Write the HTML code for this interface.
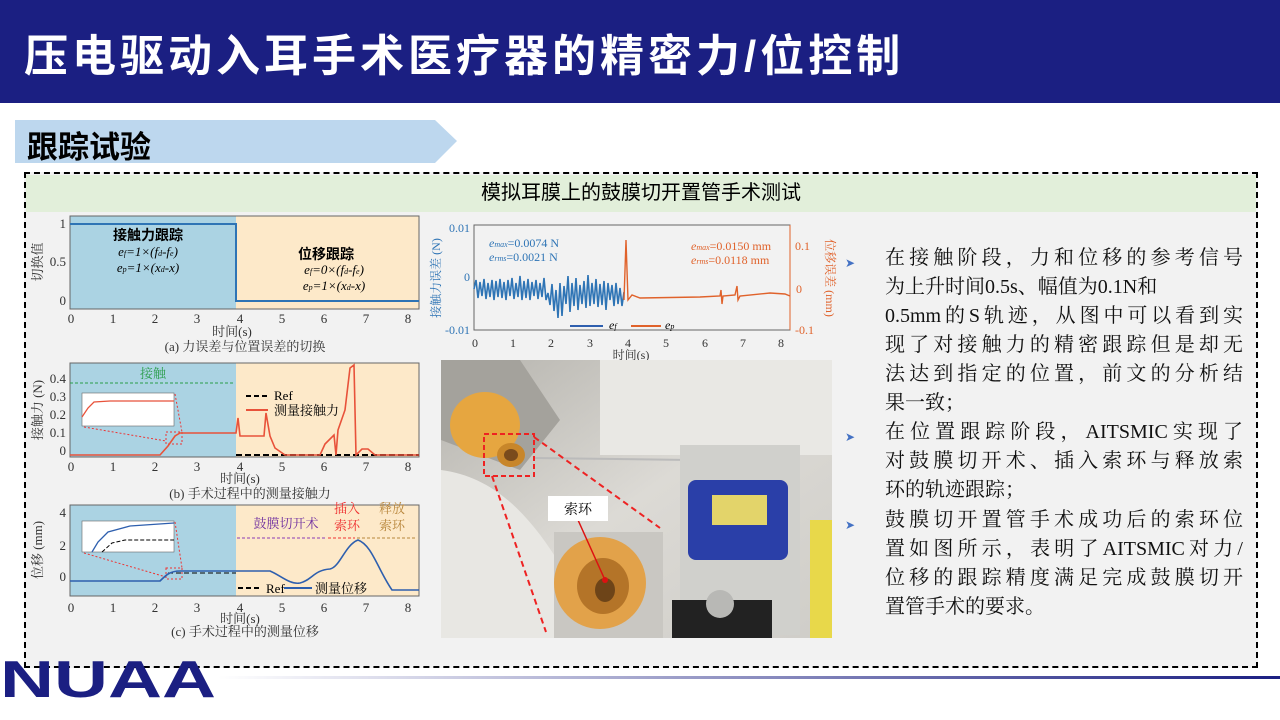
<!DOCTYPE html>
<html><head><meta charset="utf-8"><style>
*{margin:0;padding:0;box-sizing:border-box}
body{width:1280px;height:720px;background:#fff;position:relative;overflow:hidden;font-family:"Liberation Serif","Noto Serif CJK SC",serif}
.hdr{position:absolute;left:0;top:0;width:1280px;height:103px;background:#1b1f82}
.hdr div{position:absolute;left:24px;top:20px;color:#fff;font:bold 44px "Liberation Sans","Noto Sans CJK SC",sans-serif;letter-spacing:4px;white-space:nowrap}
.tag{position:absolute;left:15px;top:120px;width:442px;height:43px;background:#bdd7ee;clip-path:polygon(0 0,420px 0,442px 21px,420px 43px,0 43px)}
.tag div{position:absolute;left:12px;top:2px;font:bold 31px "Liberation Sans","Noto Sans CJK SC",sans-serif;color:#000}
.box{position:absolute;left:24px;top:172px;width:1234px;height:496px;border:2px dashed #000;background:#f2f2f2}
.gh{position:absolute;left:26px;top:175px;width:1230px;height:37px;background:#e2efda;text-align:center;font:20px "Liberation Sans","Noto Sans CJK SC",sans-serif;line-height:37px;color:#000}
.txt{position:absolute;left:885px;width:358px;font-size:20px;color:#111;line-height:29px}
.txt div{text-align:justify;text-align-last:justify;height:29px;white-space:nowrap}
.txt div.l{text-align-last:left}
.bl{position:absolute;left:845px;color:#4472c4;font-size:12px}
</style></head><body>
<div class="hdr"><div>压电驱动入耳手术医疗器的精密力/位控制</div></div>
<div class="tag"><div>跟踪试验</div></div>
<div class="box"></div>
<div class="gh">模拟耳膜上的鼓膜切开置管手术测试</div>

<svg style="position:absolute;left:0;top:0" width="1280" height="720" font-family="Liberation Serif,Noto Serif CJK SC,serif">
<rect x="70" y="216" width="166" height="93" fill="#abd3e3"/>
<rect x="236" y="216" width="183" height="93" fill="#fde9c9"/>
<rect x="70" y="216" width="349" height="93" fill="none" stroke="#666"/>
<polyline points="70,224 236,224 236,301 419,301" fill="none" stroke="#2e74b5" stroke-width="2"/>
<g font-size="13" fill="#333" text-anchor="end"><text x="66" y="228">1</text><text x="66" y="266">0.5</text><text x="66" y="305">0</text></g>
<g font-size="13" fill="#333" text-anchor="middle"><text x="71" y="323">0</text><text x="113" y="323">1</text><text x="155" y="323">2</text><text x="197" y="323">3</text><text x="240" y="323">4</text><text x="282" y="323">5</text><text x="324" y="323">6</text><text x="366" y="323">7</text><text x="408" y="323">8</text>
<text x="232" y="336">时间(s)</text><text x="245" y="351">(a) 力误差与位置误差的切换</text></g>
<text x="42" y="262" font-size="13" fill="#333" transform="rotate(-90 42 262)" text-anchor="middle">切换值</text>
<text x="148" y="240" font-size="14" font-weight="bold" text-anchor="middle" font-family="Liberation Sans,Noto Sans CJK SC,sans-serif">接触力跟踪</text>
<g font-size="13" font-style="italic" text-anchor="middle"><text x="148" y="256">e<tspan font-size="8">f</tspan>=1×(f<tspan font-size="8">d</tspan>-f<tspan font-size="8">e</tspan>)</text><text x="148" y="272">e<tspan font-size="8">p</tspan>=1×(x<tspan font-size="8">d</tspan>-x)</text>
<text x="326" y="259" font-size="14" font-weight="bold" font-style="normal" font-family="Liberation Sans,Noto Sans CJK SC,sans-serif">位移跟踪</text>
<text x="334" y="274">e<tspan font-size="8">f</tspan>=0×(f<tspan font-size="8">d</tspan>-f<tspan font-size="8">e</tspan>)</text><text x="334" y="290">e<tspan font-size="8">p</tspan>=1×(x<tspan font-size="8">d</tspan>-x)</text></g>

<rect x="70" y="363" width="166" height="94" fill="#abd3e3"/>
<rect x="236" y="363" width="183" height="94" fill="#fde9c9"/>
<rect x="70" y="363" width="349" height="94" fill="none" stroke="#666"/>
<line x1="70" y1="383" x2="235" y2="383" stroke="#2a9d4a" stroke-dasharray="3,2"/>
<text x="153" y="378" font-size="13" fill="#2a9d4a" text-anchor="middle">接触</text>
<rect x="82" y="393" width="92" height="33" fill="#fff" stroke="#666" stroke-width=".6"/>
<polyline points="82,417 88,408 94,402 110,401 174,401" fill="none" stroke="#e8523a" stroke-width="1.3"/>
<rect x="166" y="432" width="16" height="12" fill="none" stroke="#e33" stroke-dasharray="2,2"/>
<line x1="84" y1="427" x2="166" y2="441" stroke="#e33" stroke-dasharray="2,2"/>
<line x1="175" y1="394" x2="182" y2="432" stroke="#e33" stroke-dasharray="2,2"/>
<line x1="236" y1="455" x2="419" y2="455" stroke="#000" stroke-width="2" stroke-dasharray="6,3"/>
<polyline points="70,455 160,455 168,446 175,436 180,433 236,433 238,418 240,436 264,436 266,413 270,436 275,448 285,455 320,455 325,444 334,435 336,455 338,430 345,410 350,368 354,365 356,455 362,449 368,449 375,455 419,455" fill="none" stroke="#e8523a" stroke-width="1.6"/>
<line x1="246" y1="396" x2="268" y2="396" stroke="#000" stroke-width="2" stroke-dasharray="5,3"/><text x="274" y="400" font-size="13">Ref</text>
<line x1="246" y1="410" x2="268" y2="410" stroke="#e8523a" stroke-width="2"/><text x="274" y="415" font-size="13">测量接触力</text>
<g font-size="13" fill="#333" text-anchor="end"><text x="66" y="383">0.4</text><text x="66" y="401">0.3</text><text x="66" y="419">0.2</text><text x="66" y="437">0.1</text><text x="66" y="455">0</text></g>
<g font-size="13" fill="#333" text-anchor="middle"><text x="71" y="471">0</text><text x="113" y="471">1</text><text x="155" y="471">2</text><text x="197" y="471">3</text><text x="240" y="471">4</text><text x="282" y="471">5</text><text x="324" y="471">6</text><text x="366" y="471">7</text><text x="408" y="471">8</text>
<text x="240" y="483">时间(s)</text><text x="250" y="498">(b) 手术过程中的测量接触力</text></g>
<text x="42" y="410" font-size="13" fill="#333" transform="rotate(-90 42 410)" text-anchor="middle">接触力 (N)</text>

<rect x="70" y="505" width="166" height="91" fill="#abd3e3"/>
<rect x="236" y="505" width="183" height="91" fill="#fde9c9"/>
<rect x="70" y="505" width="349" height="91" fill="none" stroke="#666"/>
<rect x="82" y="521" width="92" height="31" fill="#fff" stroke="#666" stroke-width=".6"/>
<polyline points="92,552 98,542 108,532 130,526 174,523" fill="none" stroke="#2e5fae" stroke-width="1.3"/>
<polyline points="102,552 112,543 125,540 174,540" fill="none" stroke="#000" stroke-dasharray="4,2"/>
<rect x="166" y="568" width="16" height="11" fill="none" stroke="#e33" stroke-dasharray="2,2"/>
<line x1="84" y1="553" x2="166" y2="577" stroke="#e33" stroke-dasharray="2,2"/>
<line x1="175" y1="522" x2="182" y2="568" stroke="#e33" stroke-dasharray="2,2"/>
<line x1="168" y1="573" x2="236" y2="573" stroke="#000" stroke-dasharray="5,3"/>
<path d="M70,581 L160,581 C166,575 170,571 180,571 L236,571 L270,571 C280,575 290,585 300,583 C312,580 314,570 330,569 C340,567 345,545 358,540 C372,545 378,570 392,590 L419,590" fill="none" stroke="#2e5fae" stroke-width="1.6"/>
<line x1="237" y1="538" x2="325" y2="538" stroke="#8a3ab5" stroke-dasharray="3,2"/><text x="286" y="528" font-size="13" fill="#7030a0" text-anchor="middle">鼓膜切开术</text>
<line x1="328" y1="538" x2="355" y2="538" stroke="#e33" stroke-dasharray="3,2"/><text x="347" y="513" font-size="13" fill="#e33" text-anchor="middle">插入</text><text x="347" y="530" font-size="13" fill="#e33" text-anchor="middle">索环</text>
<line x1="357" y1="538" x2="417" y2="538" stroke="#b8863b" stroke-dasharray="3,2"/><text x="392" y="513" font-size="13" fill="#b8863b" text-anchor="middle">释放</text><text x="392" y="530" font-size="13" fill="#b8863b" text-anchor="middle">索环</text>
<line x1="238" y1="588" x2="260" y2="588" stroke="#000" stroke-width="2" stroke-dasharray="5,3"/><text x="266" y="593" font-size="13">Ref</text>
<line x1="284" y1="588" x2="312" y2="588" stroke="#2e5fae" stroke-width="2"/><text x="315" y="593" font-size="13">测量位移</text>
<g font-size="13" fill="#333" text-anchor="end"><text x="66" y="517">4</text><text x="66" y="550">2</text><text x="66" y="581">0</text></g>
<g font-size="13" fill="#333" text-anchor="middle"><text x="71" y="612">0</text><text x="113" y="612">1</text><text x="155" y="612">2</text><text x="197" y="612">3</text><text x="240" y="612">4</text><text x="282" y="612">5</text><text x="324" y="612">6</text><text x="366" y="612">7</text><text x="408" y="612">8</text>
<text x="240" y="623">时间(s)</text><text x="245" y="636">(c) 手术过程中的测量位移</text></g>
<text x="42" y="550" font-size="13" fill="#333" transform="rotate(-90 42 550)" text-anchor="middle">位移 (mm)</text>

<rect x="474" y="225" width="316" height="105" fill="none" stroke="#666"/>
<line x1="790" y1="225" x2="790" y2="330" stroke="#e0622b"/>
<path d="M474,289 L476,280 L478,298 L480,282 L482,296 L484,279 L486,299 L488,283 L490,297 L492,280 L494,300 L496,281 L498,297 L500,279 L502,298 L504,282 L506,300 L508,280 L510,296 L512,278 L514,299 L516,283 L518,297 L520,276 L522,300 L524,281 L526,298 L528,279 L530,300 L532,282 L534,296 L536,280 L538,299 L540,283 L542,297 L544,278 L546,300 L548,293 L550,305 L552,284 L554,311 L556,290 L558,318 L560,283 L562,316 L564,286 L566,304 L568,276 L570,312 L572,283 L574,306 L576,278 L578,310 L580,285 L582,304 L584,281 L586,308 L588,275 L590,306 L592,283 L594,304 L596,279 L598,307 L600,284 L602,305 L604,281 L606,310 L608,283 L610,300 L612,285 L614,306 L616,283 L618,304 L620,288 L622,306 L624,292" fill="none" stroke="#2e74b5" stroke-width="1.6"/>
<path d="M624,300 L626,240 L628,300 L632,295 L640,298 L700,297 L720,296 L721,290 L722,304 L723,296 L735,295 L737,286 L738,300 L740,296 L770,293 L785,294 L790,296" fill="none" stroke="#e0622b" stroke-width="1.4"/>
<g font-size="12" fill="#2e74b5"><text x="470" y="232" text-anchor="end">0.01</text><text x="470" y="281" text-anchor="end">0</text><text x="470" y="334" text-anchor="end">-0.01</text>
<text x="489" y="247" font-style="italic">e<tspan font-size="8">max</tspan><tspan font-style="normal">=0.0074 N</tspan></text><text x="489" y="261" font-style="italic">e<tspan font-size="8">rms</tspan><tspan font-style="normal">=0.0021 N</tspan></text>
<text x="440" y="278" transform="rotate(-90 440 278)" text-anchor="middle">接触力误差 (N)</text></g>
<g font-size="12" fill="#e0622b"><text x="795" y="250">0.1</text><text x="796" y="293">0</text><text x="795" y="334">-0.1</text>
<text x="691" y="250" font-style="italic">e<tspan font-size="8">max</tspan><tspan font-style="normal">=0.0150 mm</tspan></text><text x="691" y="264" font-style="italic">e<tspan font-size="8">rms</tspan><tspan font-style="normal">=0.0118 mm</tspan></text>
<text x="826" y="278" transform="rotate(90 826 278)" text-anchor="middle">位移误差 (mm)</text></g>
<line x1="570" y1="326" x2="603" y2="326" stroke="#2e5fae" stroke-width="2"/><text x="609" y="329" font-size="12" font-style="italic">e<tspan font-size="8">f</tspan></text>
<line x1="631" y1="326" x2="661" y2="326" stroke="#e0622b" stroke-width="2"/><text x="665" y="329" font-size="12" font-style="italic">e<tspan font-size="8">p</tspan></text>
<g font-size="12" fill="#333" text-anchor="middle"><text x="475" y="347">0</text><text x="513" y="347">1</text><text x="551" y="347">2</text><text x="590" y="347">3</text><text x="628" y="347">4</text><text x="666" y="347">5</text><text x="705" y="347">6</text><text x="743" y="347">7</text><text x="781" y="347">8</text><text x="631" y="359">时间(s)</text></g>

<defs><linearGradient id="bg" x1="0" y1="0" x2="1" y2="1"><stop offset="0" stop-color="#b5b3ad"/><stop offset=".5" stop-color="#dcdad5"/><stop offset="1" stop-color="#cfcdc8"/></linearGradient>
<linearGradient id="ln" x1="0" x2="1"><stop offset="0" stop-color="#fff"/><stop offset="1" stop-color="#1b1f82"/></linearGradient></defs>
<rect x="441" y="360" width="391" height="278" fill="url(#bg)"/>
<rect x="600" y="360" width="232" height="95" fill="#e9e8e4"/>
<polygon points="441,360 520,360 560,420 520,470 441,440" fill="#a4a29c"/>
<path d="M441,470 C520,480 560,560 600,638 L441,638 Z" fill="#e8e7e3"/>
<ellipse cx="485" cy="425" rx="35" ry="33" fill="#e6a640"/>
<ellipse cx="511" cy="455" rx="14" ry="12" fill="#c8862a"/>
<ellipse cx="511" cy="455" rx="7" ry="6" fill="#7a4b1c"/>
<rect x="484" y="434" width="50" height="42" fill="none" stroke="#e22" stroke-width="2" stroke-dasharray="5,3"/>
<line x1="535" y1="458" x2="690" y2="460" stroke="#bbb" stroke-width="2"/>
<line x1="534" y1="437" x2="660" y2="528" stroke="#e22" stroke-width="2" stroke-dasharray="6,4"/>
<line x1="492" y1="476" x2="546" y2="632" stroke="#e22" stroke-width="2" stroke-dasharray="6,4"/>
<rect x="680" y="445" width="120" height="190" fill="#d0d0cc"/>
<rect x="688" y="480" width="100" height="80" rx="8" fill="#2a3fa8"/>
<rect x="712" y="495" width="55" height="30" fill="#e3d46a"/>
<rect x="672" y="600" width="100" height="38" fill="#222"/>
<circle cx="720" cy="604" r="14" fill="#b8b8b5"/>
<rect x="810" y="520" width="22" height="118" fill="#e8d84a"/>
<rect x="554" y="532" width="109" height="106" fill="#c9c7c2"/>
<ellipse cx="600" cy="583" rx="46" ry="46" fill="#e2a24a"/>
<ellipse cx="603" cy="586" rx="26" ry="28" fill="#b47428"/>
<ellipse cx="605" cy="590" rx="10" ry="12" fill="#6d4418"/>
<circle cx="605" cy="580" r="3" fill="#d11"/>
<line x1="578" y1="520" x2="605" y2="580" stroke="#d11" stroke-width="1.5"/>
<rect x="548" y="496" width="60" height="25" fill="#fff"/>
<text x="578" y="514" font-size="14" text-anchor="middle">索环</text>

<text x="0" y="697" font-family="Liberation Sans,sans-serif" font-weight="bold" font-size="52" fill="#1b1f82" textLength="216" lengthAdjust="spacingAndGlyphs">NUAA</text>
<rect x="218" y="676" width="1062" height="3" fill="url(#ln)"/>
</svg>

<div class="bl" style="top:256px">➤</div>
<div class="bl" style="top:430px">➤</div>
<div class="bl" style="top:518px">➤</div>
<div class="txt" style="top:244px">
<div>在接触阶段，力和位移的参考信号</div>
<div class="l">为上升时间0.5s、幅值为0.1N和</div>
<div>0.5mm的S轨迹，从图中可以看到实</div>
<div>现了对接触力的精密跟踪但是却无</div>
<div>法达到指定的位置，前文的分析结</div>
<div class="l">果一致；</div>
</div>
<div class="txt" style="top:418px">
<div>在位置跟踪阶段，AITSMIC实现了</div>
<div>对鼓膜切开术、插入索环与释放索</div>
<div class="l">环的轨迹跟踪；</div>
</div>
<div class="txt" style="top:506px">
<div>鼓膜切开置管手术成功后的索环位</div>
<div>置如图所示，表明了AITSMIC对力/</div>
<div>位移的跟踪精度满足完成鼓膜切开</div>
<div class="l">置管手术的要求。</div>
</div>
</body></html>
